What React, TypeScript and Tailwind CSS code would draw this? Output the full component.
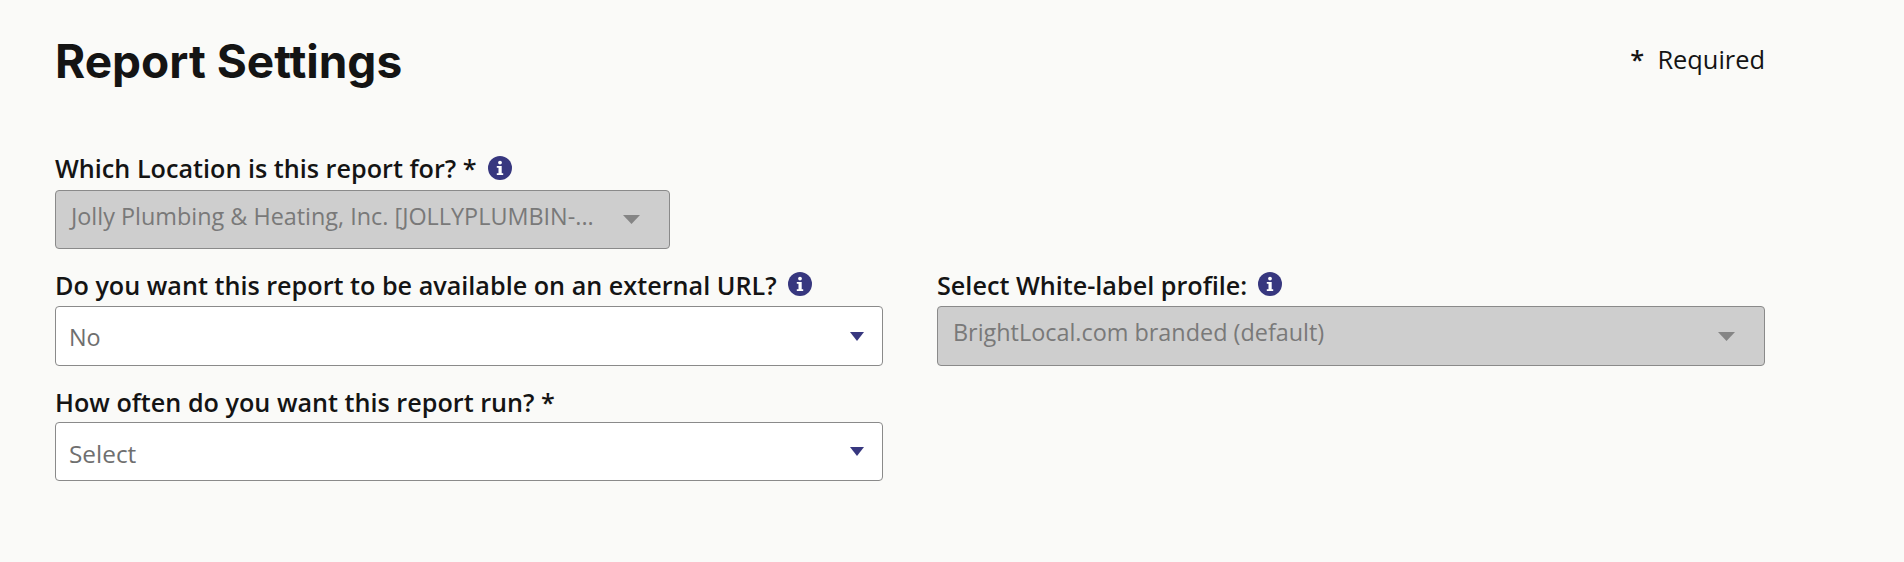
function Info() {
  return (
    <svg viewBox="0 0 24 24" className="relative top-[-1px] h-[24px] w-[24px] shrink-0">
      <circle cx="12" cy="12" r="12" fill="#37377f" />
      <circle cx="12" cy="6.6" r="1.9" fill="#fff" />
      <path d="M8.8 10h4.9v7.2h1.5V19H8.8v-1.8h1.7v-5.4H8.8z" fill="#fff" />
    </svg>
  );
}

function Caret({ color, wide }: { color: string; wide?: boolean }) {
  return (
    <svg viewBox="0 0 14 9" preserveAspectRatio="none" className={`h-[9px] shrink-0 ${wide ? "w-[17px]" : "w-[14px]"}`}>
      <path d="M0 0h14L7 9z" fill={color} />
    </svg>
  );
}

function Field({
  label,
  value,
  info,
  disabled,
  short,
  className,
  labelClass,
  valueClass,
}: {
  label: string;
  value: string;
  info?: boolean;
  disabled?: boolean;
  short?: boolean;
  className?: string;
  labelClass?: string;
  valueClass?: string;
}) {
  return (
    <div className={className}>
      <div className="mb-[3px] flex h-[36px] items-center gap-[11px] text-[25.2px] font-semibold text-[#141414]">
        <span className={labelClass}>{label}</span>
        {info && <Info />}
      </div>
      <div
        className={`flex items-center justify-between rounded-[4px] border border-[#8a8a8a] text-[23.4px] ${
          short ? "h-[59px]" : "h-[60px]"
        } ${
          disabled ? "bg-[#cecece] pl-[15px] pr-[29px] text-[#797979]" : "bg-white pl-[13px] pr-[18px] text-[#6f6f6f]"
        }`}
      >
        <span className={valueClass ?? (disabled ? "pb-[6px]" : "pt-[3px]")}>{value}</span>
        <Caret color={disabled ? "#858585" : "#37377f"} wide={disabled} />
      </div>
    </div>
  );
}

export default function App() {
  return (
    <div className="min-h-[562px] bg-[#fafaf8] pl-[55px] pr-[139px] pt-[32px] font-['Open_Sans',sans-serif]">
      <div className="flex items-start justify-between">
        <h1 className="font-['Inter',sans-serif] text-[46px] font-bold leading-[58px] text-[#141414]">Report Settings</h1>
        <p className="mt-[8px] text-[25.4px] text-[#141414]">
          <span className="font-semibold">*</span>&nbsp; Required
        </p>
      </div>
      <Field
        className="mt-[61px] w-[615px]"
        label="Which Location is this report for? *"
        value="Jolly Plumbing & Heating, Inc. [JOLLYPLUMBIN-..."
        info
        disabled
        short
      />
      <div className="mt-[18px] grid grid-cols-2 gap-x-[54px]">
        <Field label="Do you want this report to be available on an external URL?" value="No" info labelClass="pt-[1px]" />
        <Field label="Select White-label profile:" value="BrightLocal.com branded (default)" info disabled labelClass="pt-[1px]" />
      </div>
      <div className="mt-[17px] grid grid-cols-2 gap-x-[54px]">
        <Field
          label="How often do you want this report run? *"
          value="Select"
          short
          labelClass="pt-[4px]"
          valueClass="pt-[5px] text-[24.4px]"
        />
      </div>
    </div>
  );
}
